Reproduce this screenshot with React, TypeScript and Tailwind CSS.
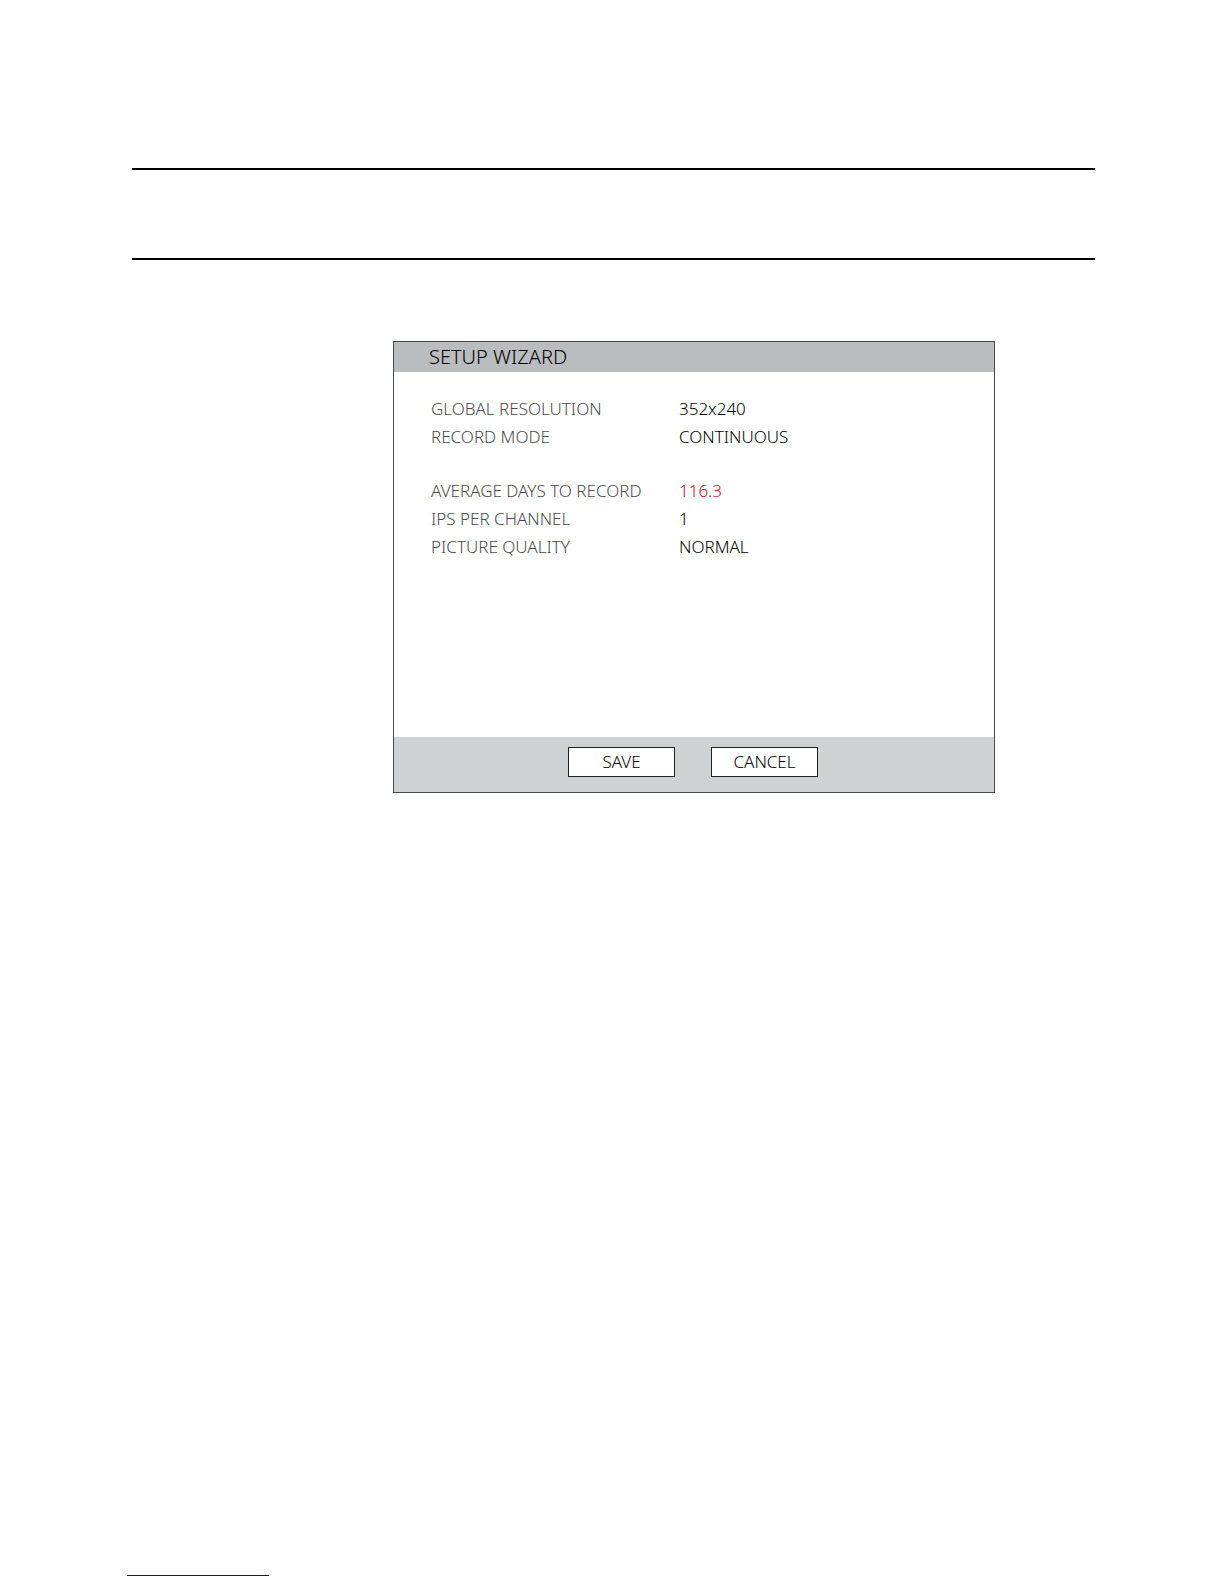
interface Setting {
  label: string;
  value: string;
  highlight?: boolean;
}

const recordingSettings: Setting[] = [
  { label: "GLOBAL RESOLUTION", value: "352x240" },
  { label: "RECORD MODE", value: "CONTINUOUS" },
];

const storageSettings: Setting[] = [
  { label: "AVERAGE DAYS TO RECORD", value: "116.3", highlight: true },
  { label: "IPS PER CHANNEL", value: "1" },
  { label: "PICTURE QUALITY", value: "NORMAL" },
];

function SettingsList({ settings }: { settings: Setting[] }) {
  return (
    <dl>
      {settings.map(({ label, value, highlight }) => (
        <div key={label} className="flex leading-7">
          <dt className="w-62 shrink-0 text-[#4a4a4c]">{label}</dt>
          <dd className={highlight ? "text-[#e0101c]" : "text-black"}>
            {value}
          </dd>
        </div>
      ))}
    </dl>
  );
}

function WizardButton({ label }: { label: string }) {
  return (
    <button
      type="button"
      className="h-[30px] w-[107px] border border-[#231f20] bg-white"
    >
      {label}
    </button>
  );
}

export default function App() {
  return (
    <div className="flex min-h-screen flex-col bg-white pt-42 pr-[129px] pb-2 pl-33 font-['Noto_Sans',sans-serif] text-[17px] font-light text-black">
      <header className="h-23 border-y-2 border-black" />

      <main className="mt-[81px] mr-25 ml-[261px] border border-[#4a4a4c]">
        <h1 className="bg-[#bbbcbe] pl-[35px] text-[20px] leading-[30px]">
          SETUP WIZARD
        </h1>
        <div className="flex min-h-[365px] flex-col gap-[26px] pt-[23px] pl-[37px]">
          <SettingsList settings={recordingSettings} />
          <SettingsList settings={storageSettings} />
        </div>
        <div className="flex justify-center gap-9 bg-[#d0d1d3] pt-2.5 pr-0.5 pb-[15px]">
          <WizardButton label="SAVE" />
          <WizardButton label="CANCEL" />
        </div>
      </main>

      <footer className="mt-auto -ml-[5px] w-[142px] border-b border-[#14146e]" />
    </div>
  );
}
